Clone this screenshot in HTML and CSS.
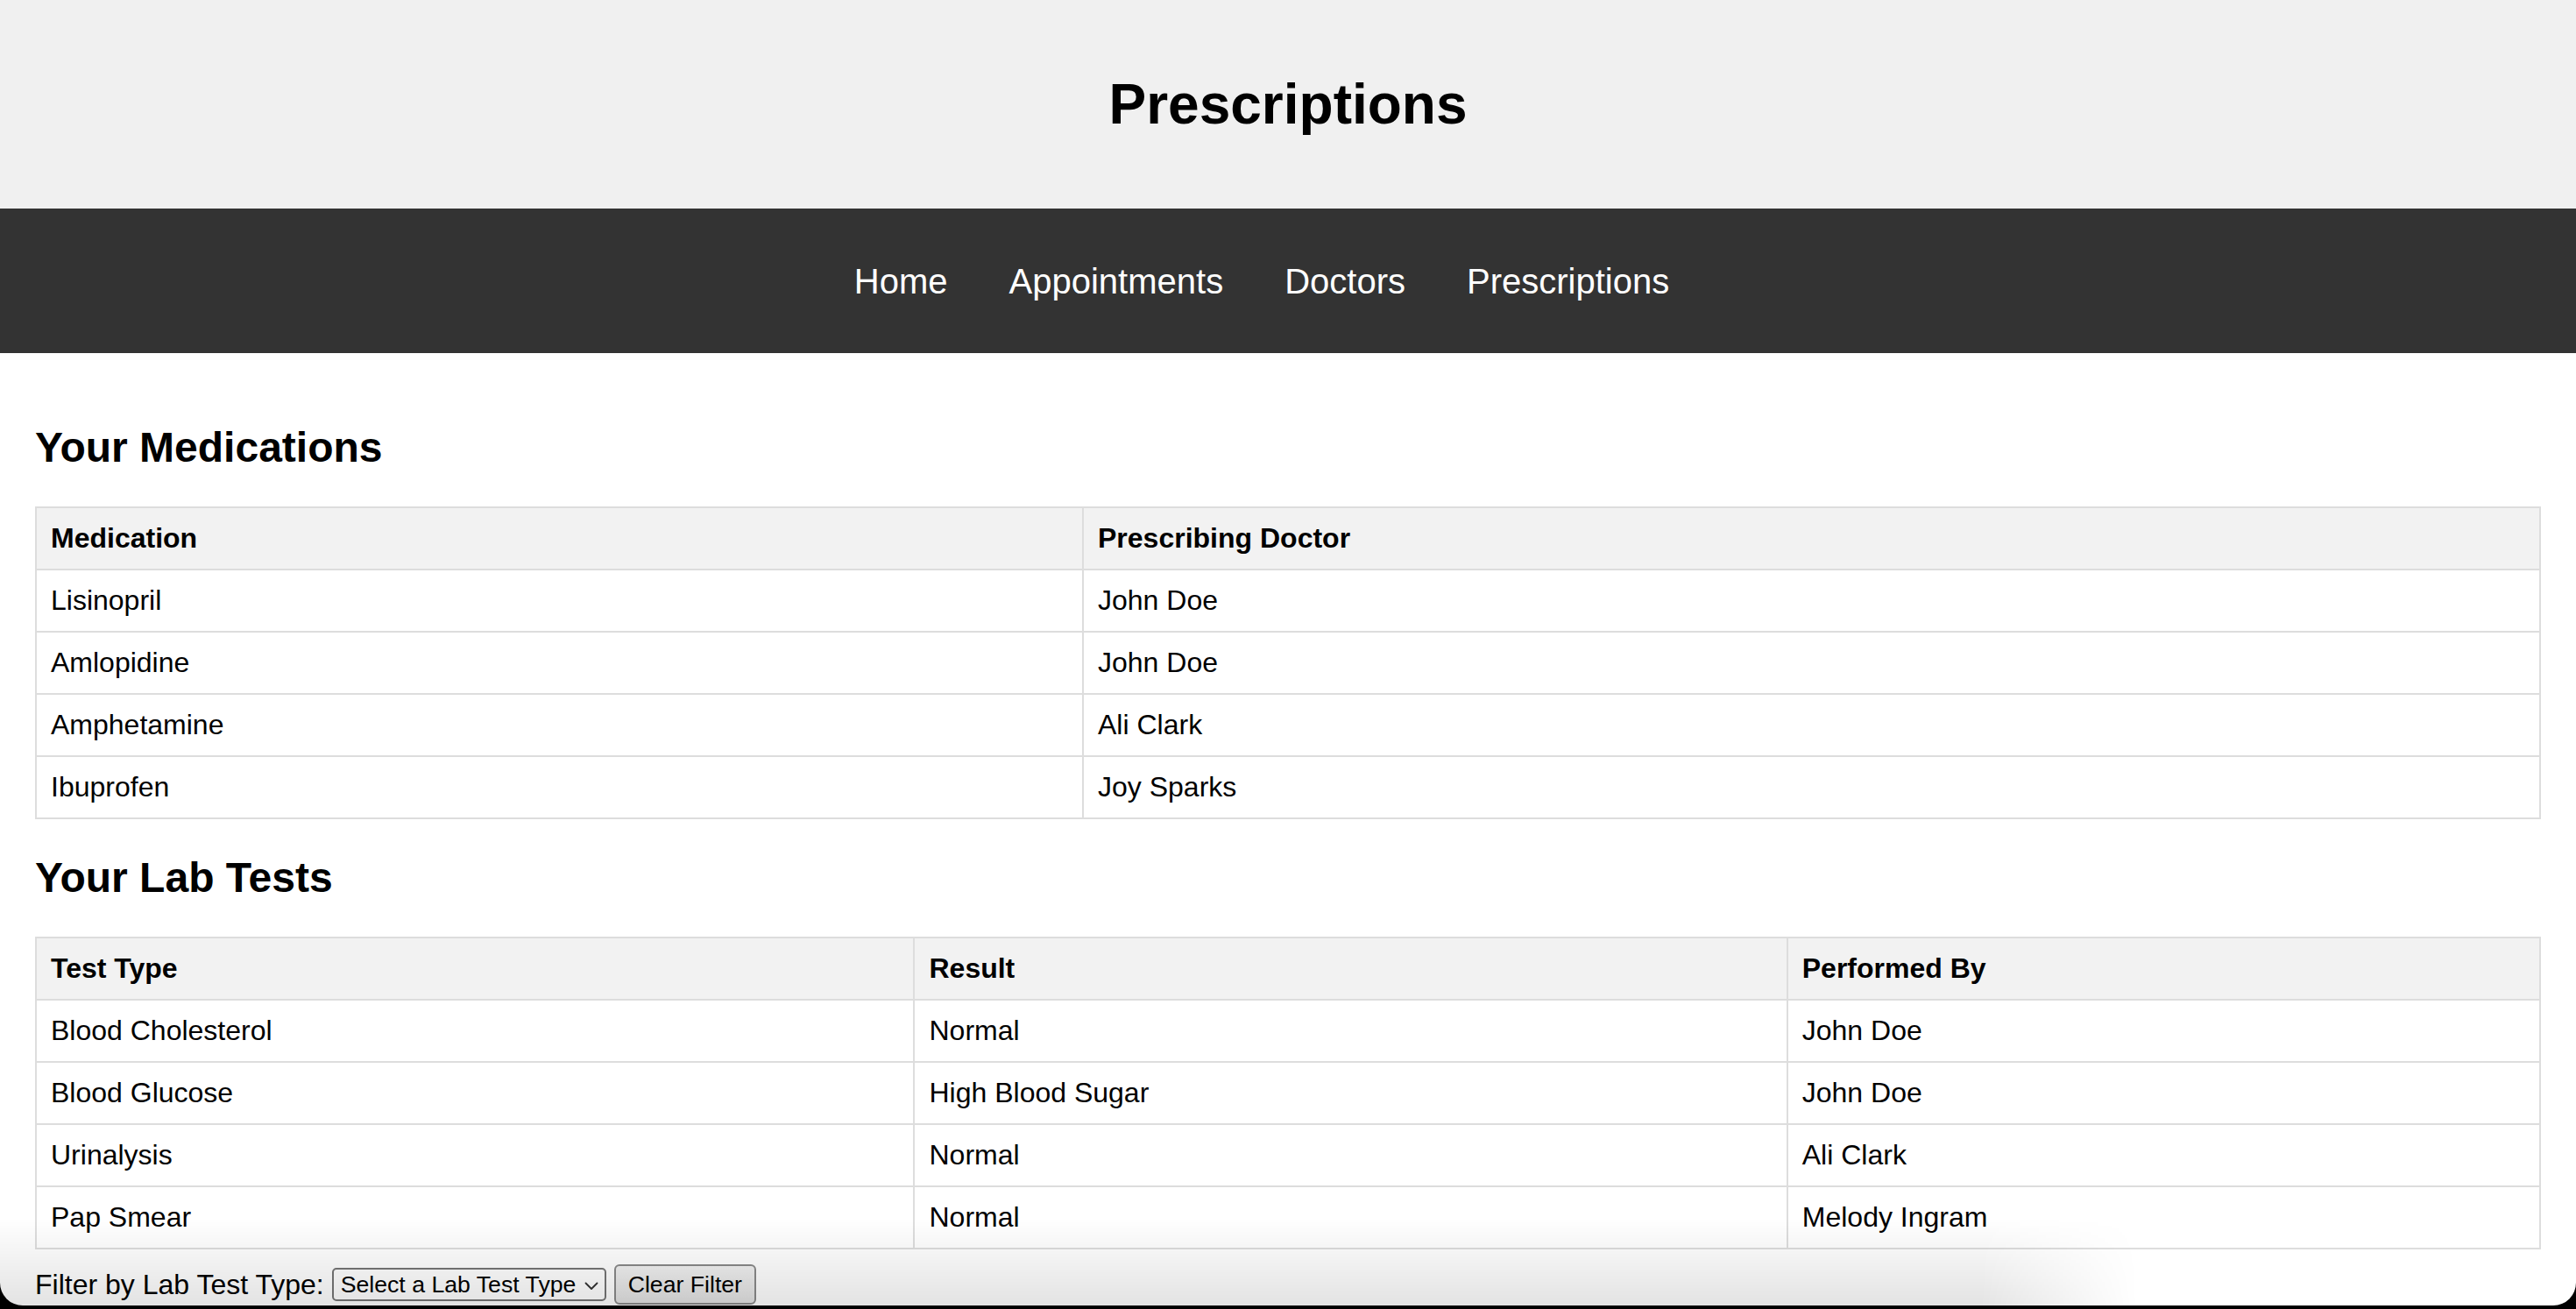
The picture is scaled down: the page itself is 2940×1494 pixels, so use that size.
FILE: index.html
```html
<!DOCTYPE html>
<html lang="en">
<head>
<meta charset="utf-8">
<title>Prescriptions</title>
<link rel="stylesheet" href="styles.css">
</head>
<body>
  <header class="site-header">
    <h1 class="site-title">Prescriptions</h1>
  </header>
  <nav class="site-nav">
    <ul class="nav-list">
      <li><a class="nav-link" href="#">Home</a></li>
      <li><a class="nav-link" href="#">Appointments</a></li>
      <li><a class="nav-link" href="#">Doctors</a></li>
      <li><a class="nav-link" href="#">Prescriptions</a></li>
    </ul>
  </nav>
  <main class="content">
    <h2 class="section-title">Your Medications</h2>
    <table class="data-table">
      <thead>
        <tr><th>Medication</th><th>Prescribing Doctor</th></tr>
      </thead>
      <tbody>
        <tr><td>Lisinopril</td><td>John Doe</td></tr>
        <tr><td>Amlopidine</td><td>John Doe</td></tr>
        <tr><td>Amphetamine</td><td>Ali Clark</td></tr>
        <tr><td>Ibuprofen</td><td>Joy Sparks</td></tr>
      </tbody>
    </table>

    <h2 class="section-title">Your Lab Tests</h2>
    <table class="data-table">
      <thead>
        <tr><th>Test Type</th><th>Result</th><th>Performed By</th></tr>
      </thead>
      <tbody>
        <tr><td>Blood Cholesterol</td><td>Normal</td><td>John Doe</td></tr>
        <tr><td>Blood Glucose</td><td>High Blood Sugar</td><td>John Doe</td></tr>
        <tr><td>Urinalysis</td><td>Normal</td><td>Ali Clark</td></tr>
        <tr><td>Pap Smear</td><td>Normal</td><td>Melody Ingram</td></tr>
      </tbody>
    </table>

    <div class="filter">
      <label class="filter-label" for="labFilter">Filter by Lab Test Type:</label>
      <span class="select-wrap">
        <select class="filter-select" id="labFilter">
          <option>Select a Lab Test Type</option>
          <option>Blood Cholesterol</option>
          <option>Blood Glucose</option>
          <option>Urinalysis</option>
          <option>Pap Smear</option>
        </select>
        <svg class="select-chevron" width="16" height="10" viewBox="0 0 16 10" aria-hidden="true">
          <polyline points="1.5,1.5 8,8 14.5,1.5" fill="none" stroke="#333" stroke-width="1.8" stroke-linecap="round" stroke-linejoin="round"/>
        </svg>
      </span>
      <button class="filter-btn" type="button">Clear Filter</button>
    </div>
  </main>
  <div class="bottom-shade" aria-hidden="true"></div>
  <div class="window-frame" aria-hidden="true"></div>
</body>
</html>
```

FILE: styles.css
```css
html, body {
  margin: 0;
  padding: 0;
}

body {
  font-family: "Liberation Sans", Arial, Helvetica, sans-serif;
  font-size: 32px;
  color: #000;
  background: #fff;
  min-height: 1494px;
}

.site-header {
  background: #f0f0f0;
  padding: 40px 0;
  text-align: center;
}

.site-title {
  margin: 42px 0;
  font-size: 64px;
  font-weight: bold;
  line-height: 74px;
}

.site-nav {
  background: #333;
  padding: 60px 0 59px;
}

.nav-list {
  list-style: none;
  margin: 0;
  padding: 0 60px 0 0;
  display: flex;
  justify-content: center;
  gap: 70px;
}

.nav-link {
  color: #fff;
  text-decoration: none;
  font-size: 40px;
  line-height: 46px;
  display: block;
}

.content {
  padding: 40px 40px 0 40px;
}

.section-title {
  font-size: 48px;
  font-weight: bold;
  line-height: 55px;
  margin: 39.5px 0 40px;
}

.data-table {
  width: 100%;
  border-collapse: collapse;
}

.data-table th,
.data-table td {
  border: 2px solid #ddd;
  padding: 16px;
  text-align: left;
  font-size: 32px;
  line-height: 37px;
}

.data-table th {
  background: #f2f2f2;
  font-weight: bold;
}

.filter {
  display: flex;
  align-items: center;
  gap: 9px;
  margin-top: 16px;
  height: 48px;
}

.filter-label {
  font-size: 32px;
  line-height: 37px;
}

.select-wrap {
  position: relative;
  display: inline-block;
}

.filter-select {
  -webkit-appearance: none;
  appearance: none;
  font-family: "Liberation Sans", Arial, Helvetica, sans-serif;
  font-size: 26.67px;
  color: #000;
  background: #fff;
  border: 2px solid #767676;
  border-radius: 5px;
  height: 38px;
  width: 313px;
  padding: 0 30px 0 8px;
  display: block;
}

.select-chevron {
  position: absolute;
  right: 9px;
  top: 16px;
  pointer-events: none;
}

.filter-btn {
  -webkit-appearance: none;
  appearance: none;
  font-family: "Liberation Sans", Arial, Helvetica, sans-serif;
  font-size: 26.67px;
  color: #000;
  background: linear-gradient(#f0f0f0, #e3e3e3);
  border: 2px solid #8a8a8a;
  border-radius: 6px;
  height: 46px;
  padding: 0 14px;
}

.bottom-shade {
  position: fixed;
  left: 0;
  bottom: 4px;
  width: 2500px;
  height: 100px;
  background: linear-gradient(to bottom, rgba(0, 0, 0, 0), rgba(0, 0, 0, 0.11));
  -webkit-mask-image: linear-gradient(to right, #000 2260px, rgba(0, 0, 0, 0) 2440px);
  mask-image: linear-gradient(to right, #000 2260px, rgba(0, 0, 0, 0) 2440px);
  pointer-events: none;
}

.window-frame {
  position: fixed;
  left: 0;
  right: 0;
  top: 0;
  bottom: 4px;
  border-radius: 0 0 26px 26px;
  box-shadow: 0 0 0 80px #000;
  pointer-events: none;
}
```
